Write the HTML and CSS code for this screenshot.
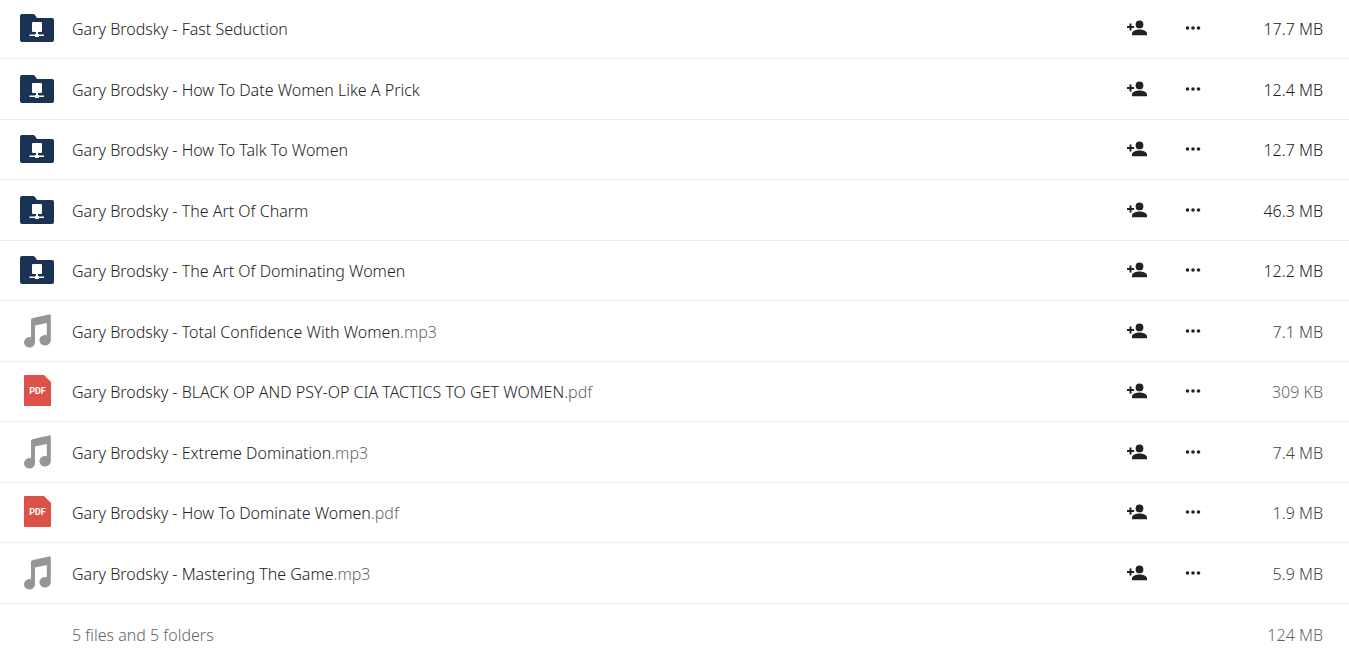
FILE: index.html
```
<!DOCTYPE html>
<html lang="en">

<head>
    <meta charset="UTF-8">
    <meta name="viewport" content="width=device-width, initial-scale=1.0">
    <title>Files</title>
    <link rel="stylesheet" href="styles.css">
</head>

<body>

    <!-- Shared icons -->
    <svg class="icon-defs" aria-hidden="true">
        <symbol id="folder" viewBox="0 0 34 28">
            <path fill="#1a3353" d="M2 0h11q1 0 2 1l2 3h15q2 0 2 2v20q0 2-2 2H2q-2 0-2-2V2q0-2 2-2z" />
            <path fill="#fff" d="M12 8h9q1 0 1 1v8q0 1-1 1h-3v2h1v.500h5v1.500h-5v1h-4v-1h-5.500v-1.500h5.500V20h1v-2h-3q-1 0-1-1V9q0-1 1-1z" />
        </symbol>
        <symbol id="music" viewBox="0 0 27 34">
            <path fill="#969696" d="M9 4 25 .4q1.800-.4 1.800 1.400V26a5.700 5.200 0 1 1-4-4.700V9L11 11.400V28a5.500 5.200 0 1 1-4-4.700V6q0-1.600 2-2z" />
        </symbol>
        <symbol id="pdf" viewBox="0 0 27 32">
            <path fill="#dc5148" d="M1 0h19l7 7v23q0 1-1 1H1q-1 0-1-1V1q0-1 1-1z" />
            <text x="13.500" y="19" text-anchor="middle" class="pdf-text">PDF</text>
        </symbol>
        <symbol id="add-person" viewBox="0 0 20 16">
            <circle cx="12.500" cy="4.400" r="3.900" />
            <path d="M5 15.200v-1.800c0-2.600 4.500-3.900 7.500-3.900s7.500 1.300 7.500 3.900v1.800zM2.500 3.500h2v2.600h2.600v1.800H4.500v2.700h-2V7.900H0V6.100h2.500z" />
        </symbol>
        <symbol id="dots" viewBox="0 0 16 4">
            <circle cx="2.500" cy="2" r="1.800" />
            <circle cx="8" cy="2" r="1.800" />
            <circle cx="13.500" cy="2" r="1.800" />
        </symbol>
    </svg>

    <table class="files">
        <tbody>
            <tr>
                <td class="type"><svg class="folder-icon"><use href="#folder" /></svg></td>
                <td class="name"><a href="#">Gary Brodsky - Fast Seduction</a></td>
                <td class="action"><button aria-label="Share"><svg class="share-icon"><use href="#add-person" /></svg></button></td>
                <td class="action"><button aria-label="More"><svg class="more-icon"><use href="#dots" /></svg></button></td>
                <td class="size dark">17.7 MB</td>
            </tr>
            <tr>
                <td class="type"><svg class="folder-icon"><use href="#folder" /></svg></td>
                <td class="name"><a href="#">Gary Brodsky - How To Date Women Like A Prick</a></td>
                <td class="action"><button aria-label="Share"><svg class="share-icon"><use href="#add-person" /></svg></button></td>
                <td class="action"><button aria-label="More"><svg class="more-icon"><use href="#dots" /></svg></button></td>
                <td class="size dark">12.4 MB</td>
            </tr>
            <tr>
                <td class="type"><svg class="folder-icon"><use href="#folder" /></svg></td>
                <td class="name"><a href="#">Gary Brodsky - How To Talk To Women</a></td>
                <td class="action"><button aria-label="Share"><svg class="share-icon"><use href="#add-person" /></svg></button></td>
                <td class="action"><button aria-label="More"><svg class="more-icon"><use href="#dots" /></svg></button></td>
                <td class="size dark">12.7 MB</td>
            </tr>
            <tr>
                <td class="type"><svg class="folder-icon"><use href="#folder" /></svg></td>
                <td class="name"><a href="#">Gary Brodsky - The Art Of Charm</a></td>
                <td class="action"><button aria-label="Share"><svg class="share-icon"><use href="#add-person" /></svg></button></td>
                <td class="action"><button aria-label="More"><svg class="more-icon"><use href="#dots" /></svg></button></td>
                <td class="size dark">46.3 MB</td>
            </tr>
            <tr>
                <td class="type"><svg class="folder-icon"><use href="#folder" /></svg></td>
                <td class="name"><a href="#">Gary Brodsky - The Art Of Dominating Women</a></td>
                <td class="action"><button aria-label="Share"><svg class="share-icon"><use href="#add-person" /></svg></button></td>
                <td class="action"><button aria-label="More"><svg class="more-icon"><use href="#dots" /></svg></button></td>
                <td class="size dark">12.2 MB</td>
            </tr>
            <tr>
                <td class="type"><svg class="file-icon"><use href="#music" /></svg></td>
                <td class="name"><a href="#">Gary Brodsky - Total Confidence With Women<span class="ext">.mp3</span></a></td>
                <td class="action"><button aria-label="Share"><svg class="share-icon"><use href="#add-person" /></svg></button></td>
                <td class="action"><button aria-label="More"><svg class="more-icon"><use href="#dots" /></svg></button></td>
                <td class="size">7.1 MB</td>
            </tr>
            <tr>
                <td class="type"><svg class="file-icon"><use href="#pdf" /></svg></td>
                <td class="name"><a href="#">Gary Brodsky - BLACK OP AND PSY-OP CIA TACTICS TO GET WOMEN<span class="ext">.pdf</span></a></td>
                <td class="action"><button aria-label="Share"><svg class="share-icon"><use href="#add-person" /></svg></button></td>
                <td class="action"><button aria-label="More"><svg class="more-icon"><use href="#dots" /></svg></button></td>
                <td class="size light">309 KB</td>
            </tr>
            <tr>
                <td class="type"><svg class="file-icon"><use href="#music" /></svg></td>
                <td class="name"><a href="#">Gary Brodsky - Extreme Domination<span class="ext">.mp3</span></a></td>
                <td class="action"><button aria-label="Share"><svg class="share-icon"><use href="#add-person" /></svg></button></td>
                <td class="action"><button aria-label="More"><svg class="more-icon"><use href="#dots" /></svg></button></td>
                <td class="size">7.4 MB</td>
            </tr>
            <tr>
                <td class="type"><svg class="file-icon"><use href="#pdf" /></svg></td>
                <td class="name"><a href="#">Gary Brodsky - How To Dominate Women<span class="ext">.pdf</span></a></td>
                <td class="action"><button aria-label="Share"><svg class="share-icon"><use href="#add-person" /></svg></button></td>
                <td class="action"><button aria-label="More"><svg class="more-icon"><use href="#dots" /></svg></button></td>
                <td class="size">1.9 MB</td>
            </tr>
            <tr>
                <td class="type"><svg class="file-icon"><use href="#music" /></svg></td>
                <td class="name"><a href="#">Gary Brodsky - Mastering The Game<span class="ext">.mp3</span></a></td>
                <td class="action"><button aria-label="Share"><svg class="share-icon"><use href="#add-person" /></svg></button></td>
                <td class="action"><button aria-label="More"><svg class="more-icon"><use href="#dots" /></svg></button></td>
                <td class="size">5.9 MB</td>
            </tr>
        </tbody>
        <tfoot>
            <tr>
                <td class="type"></td>
                <td class="name">5 files and 5 folders</td>
                <td colspan="3" class="size light">124 MB</td>
            </tr>
        </tfoot>
    </table>

</body>

</html>
```
FILE: styles.css
```
body {
    margin: 0;
    overflow: hidden;
    background-color: #fff;
    color: #222;
    font-family: 'Segoe UI', 'Noto Sans', sans-serif;
    font-size: 16px;
    font-weight: 300;
    line-height: 24px;
}

.icon-defs {
    display: none;
}

.files {
    width: 100%;
    border-spacing: 0;
}

td {
    box-sizing: border-box;
    height: 60px;
    padding: 0;
    border-bottom: 1px solid #ebebeb;
    vertical-align: middle;
}

tr:nth-child(even) td {
    height: 61px;
}

tbody tr:first-child td {
    height: 59px;
    padding-bottom: 2px;
}

tfoot td {
    height: 61px;
    border-bottom: 0;
}

.type {
    width: 72px;
    padding-bottom: 1px;
    padding-left: 20px;
}

.name {
    padding-top: 1px;
}

.name a {
    color: #222;
    text-decoration: none;
}

.name a:hover {
    text-decoration: underline;
}

.name .ext,
tfoot .name {
    color: #666;
}

.action {
    width: 56px;
    padding-bottom: 1px;
    text-align: center;
}

.size {
    width: 128px;
    padding-top: 1px;
    padding-right: 26px;
    color: #444;
    text-align: right;
}

.size.dark {
    color: #222;
}

.size.light {
    color: #666;
}

svg {
    display: block;
}

.folder-icon {
    width: 34px;
    height: 28px;
}

.file-icon {
    width: 27px;
    height: 34px;
    margin-left: 4px;
}

.pdf-text {
    fill: #fff;
    font-family: Roboto, sans-serif;
    font-size: 9px;
    font-weight: 700;
}

button {
    display: flex;
    align-items: center;
    justify-content: center;
    width: 100%;
    height: 40px;
    padding: 0;
    border: 0;
    background: none;
    color: #222;
    cursor: pointer;
}

.share-icon {
    width: 20px;
    height: 16px;
    fill: currentColor;
}

.more-icon {
    width: 16px;
    height: 4px;
    fill: currentColor;
}
```
